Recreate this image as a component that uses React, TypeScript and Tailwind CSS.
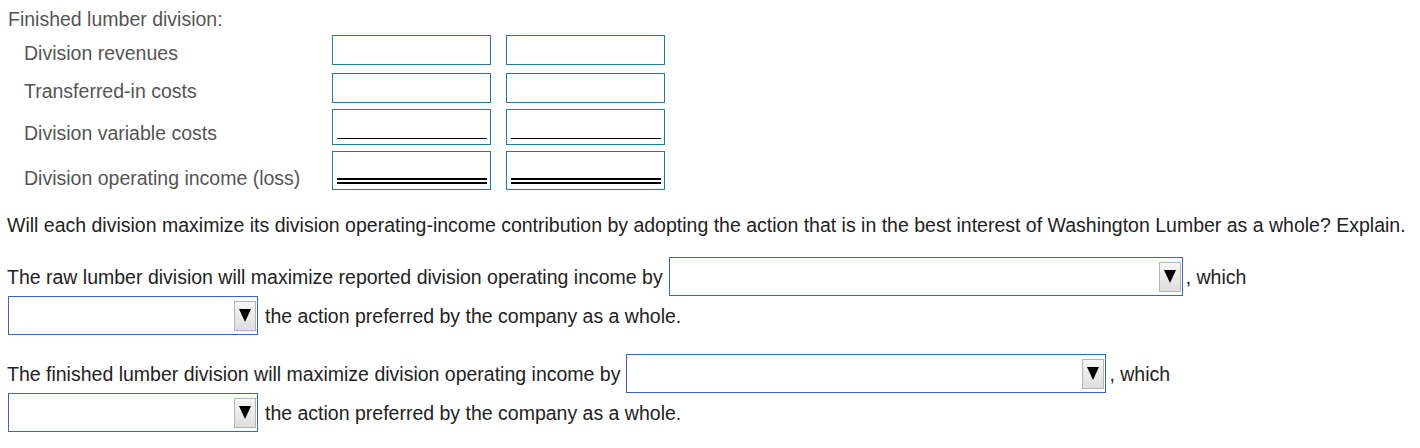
const boxBorder = 'border border-[#1f7e9e]'

function AmountBox({ height, rule }: { height: string; rule?: 'single' | 'double' }) {
  return (
    <div className={`${boxBorder} ${height} w-[159px] bg-white flex flex-col justify-end pl-[4px] pr-[3px] pb-[5px]`}>
      {rule === 'single' && <div className="h-px bg-black" />}
      {rule === 'double' && (
        <div className="flex flex-col gap-[2px]">
          <div className="h-[2px] bg-black" />
          <div className="h-[2px] bg-black" />
        </div>
      )}
    </div>
  )
}

function Row({ label, height, rule, className }: { label: string; height: string; rule?: 'single' | 'double'; className?: string }) {
  return (
    <div className={`flex items-end ${className ?? ''}`}>
      <div className="w-[324px] pl-[16px] pb-[1px] leading-[22px]">{label}</div>
      <div className="flex gap-[15px]">
        <AmountBox height={height} rule={rule} />
        <AmountBox height={height} rule={rule} />
      </div>
    </div>
  )
}

function Dropdown({ width }: { width: string }) {
  return (
    <div className={`${width} h-[39px] border border-[#3169c6] bg-white flex items-center justify-end pr-[1px] shrink-0`}>
      <div className="w-[22px] h-[30px] border border-[#b4b4b4] bg-gradient-to-b from-[#f6f6f6] to-[#dedede] flex items-center justify-center">
        <svg width="12" height="13" viewBox="0 0 12 13">
          <polygon points="0,0 12,0 6,13" fill="#000" />
        </svg>
      </div>
    </div>
  )
}

export default function App() {
  return (
    <div className="w-[1420px] h-[448px] bg-white px-[8px] text-[19.5px] leading-[22px] font-['Liberation_Sans',Arial,sans-serif]">
      <div className="text-[#555]">
        <div className="pt-[8px] mb-[5px]">Finished lumber division:</div>
        <Row label="Division revenues" height="h-[30px]" />
        <Row label="Transferred-in costs" height="h-[30px]" className="mt-[8px]" />
        <Row label="Division variable costs" height="h-[36px]" rule="single" className="mt-[6px]" />
        <Row label="Division operating income (loss)" height="h-[39px]" rule="double" className="mt-[6px]" />
      </div>

      <div className="text-[#222]">
        <p className="mt-[24px] -ml-px whitespace-nowrap">
          Will each division maximize its division operating-income contribution by adopting the action that is in the best interest of Washington Lumber as a whole? Explain.
        </p>

        <div className="mt-[21px] flex items-center">
          <span className="-ml-px mr-[6px] whitespace-nowrap">The raw lumber division will maximize reported division operating income by</span>
          <Dropdown width="w-[514px]" />
          <span className="ml-[3px] whitespace-nowrap">, which</span>
        </div>
        <div className="flex items-center">
          <Dropdown width="w-[250px]" />
          <span className="ml-[7px] whitespace-nowrap">the action preferred by the company as a whole.</span>
        </div>

        <div className="mt-[19px] flex items-center">
          <span className="-ml-px mr-[6px] whitespace-nowrap">The finished lumber division will maximize division operating income by</span>
          <Dropdown width="w-[480px]" />
          <span className="ml-[3px] whitespace-nowrap">, which</span>
        </div>
        <div className="flex items-center">
          <Dropdown width="w-[250px]" />
          <span className="ml-[7px] whitespace-nowrap">the action preferred by the company as a whole.</span>
        </div>
      </div>
    </div>
  )
}
